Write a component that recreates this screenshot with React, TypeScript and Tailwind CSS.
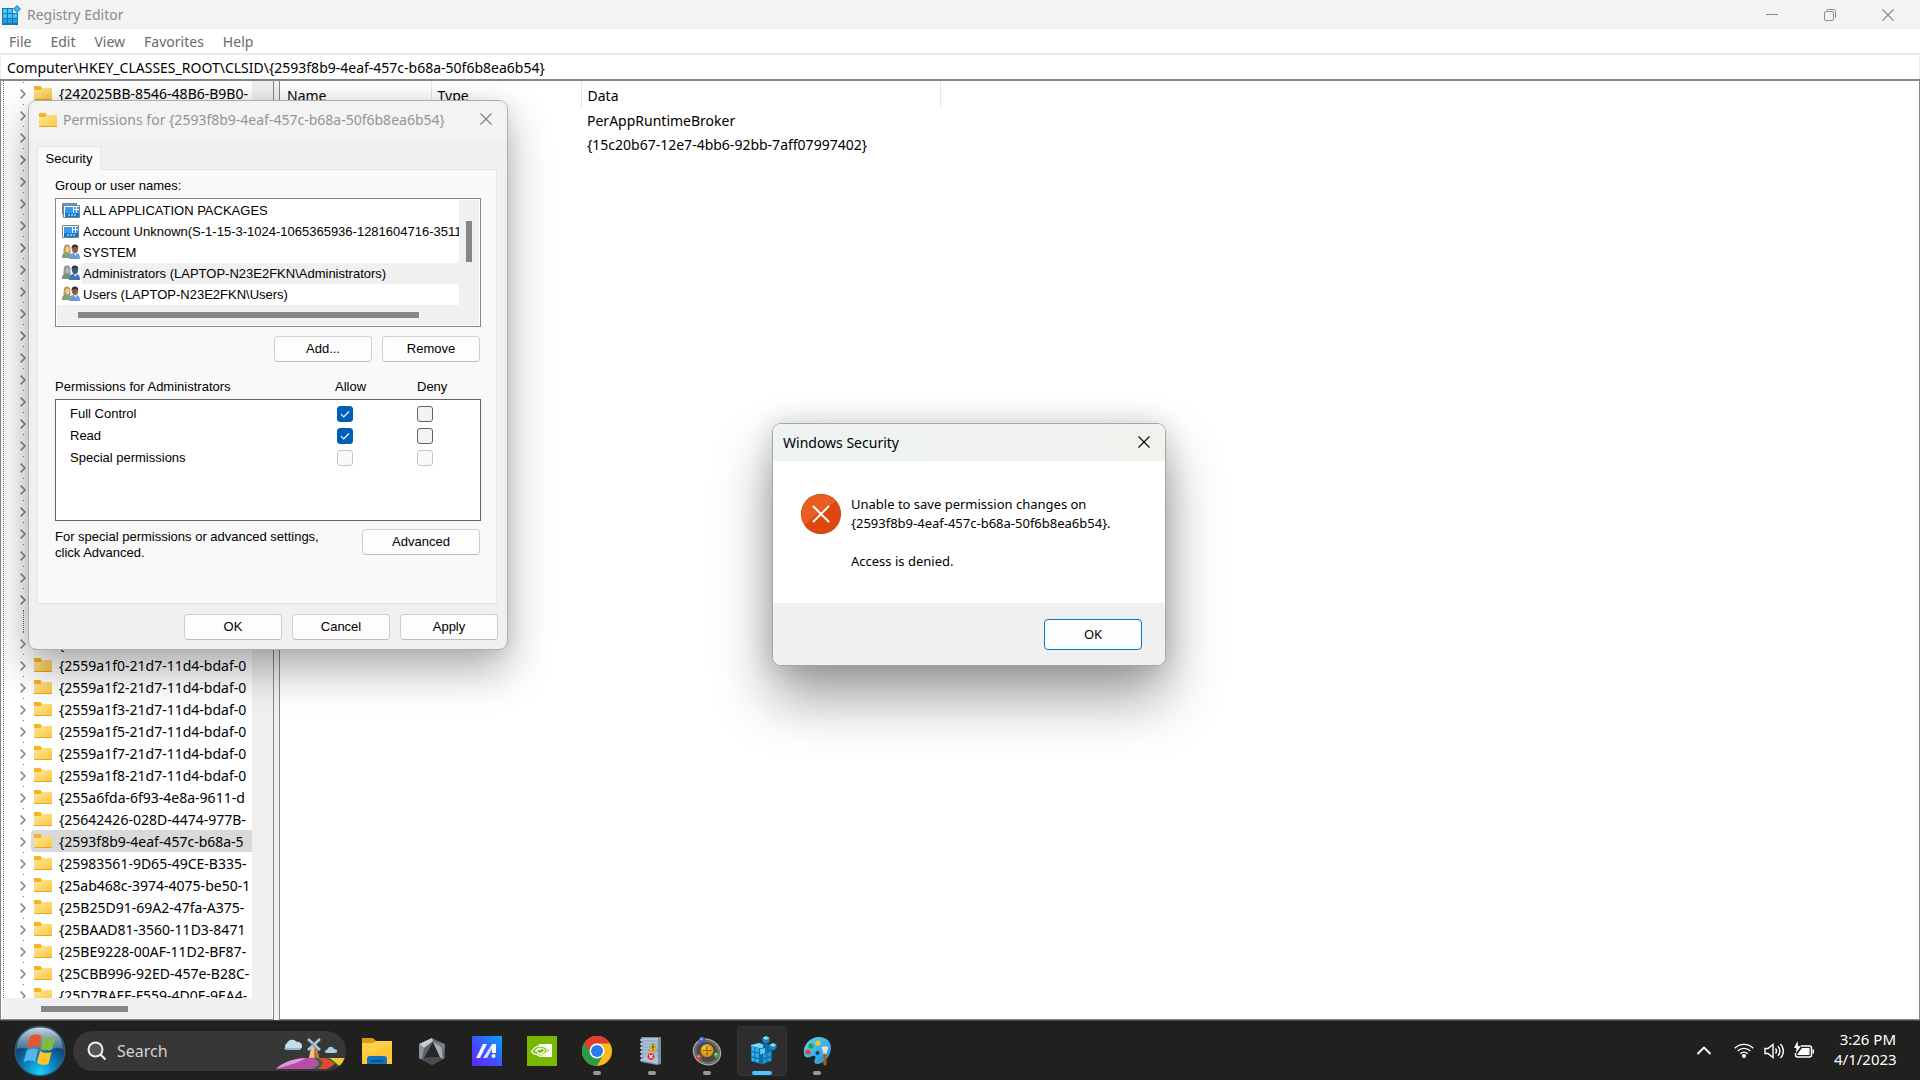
import React, { type ReactNode } from "react";

type UserIcon = "packages" | "package" | "people";

const treeKeys = [
  "{242025BB-8546-48B6-B9B0-",
  ...Array<string>(24).fill(""),
  "{",
  "{2559a1f0-21d7-11d4-bdaf-0",
  "{2559a1f2-21d7-11d4-bdaf-0",
  "{2559a1f3-21d7-11d4-bdaf-0",
  "{2559a1f5-21d7-11d4-bdaf-0",
  "{2559a1f7-21d7-11d4-bdaf-0",
  "{2559a1f8-21d7-11d4-bdaf-0",
  "{255a6fda-6f93-4e8a-9611-d",
  "{25642426-028D-4474-977B-",
  "{2593f8b9-4eaf-457c-b68a-5",
  "{25983561-9D65-49CE-B335-",
  "{25ab468c-3974-4075-be50-1",
  "{25B25D91-69A2-47fa-A375-",
  "{25BAAD81-3560-11D3-8471",
  "{25BE9228-00AF-11D2-BF87-",
  "{25CBB996-92ED-457e-B28C-",
  "{25D7BAFF-F559-4D0E-9EA4-",
];

const selectedKey = 34;
const leafKey = 24;

const users: { name: string; icon: UserIcon; selected?: boolean }[] = [
  { name: "ALL APPLICATION PACKAGES", icon: "packages" },
  {
    name: "Account Unknown(S-1-15-3-1024-1065365936-1281604716-35117",
    icon: "package",
  },
  { name: "SYSTEM", icon: "people" },
  {
    name: "Administrators (LAPTOP-N23E2FKN\\Administrators)",
    icon: "people",
    selected: true,
  },
  { name: "Users (LAPTOP-N23E2FKN\\Users)", icon: "people" },
];

const permissions = [
  { name: "Full Control", allow: true, disabled: false },
  { name: "Read", allow: true, disabled: false },
  { name: "Special permissions", allow: false, disabled: true },
];

const FolderIcon = () => (
  <svg className="h-[18px] w-[18px] shrink-0" viewBox="0 0 18 18">
    <defs>
      <linearGradient id="folder" x1="0" y1="0" x2="1" y2="1">
        <stop offset="0" stopColor="#ffe7a0" />
        <stop offset="1" stopColor="#fbc83c" />
      </linearGradient>
    </defs>
    <path d="M0 2h6.5l1.500 2H18v4H0z" fill="#f7b51c" />
    <path d="M0 6h6.6L8 4h10v11.500H0z" fill="url(#folder)" />
    <path d="M0 15h18v1H0z" fill="#e9a51d" />
  </svg>
);

const RegeditIcon = () => (
  <svg className="h-5 w-5" viewBox="0 0 20 20">
    <path d="M1 3h16v17H1z" fill="#0f79b8" />
    <path
      d="M2 4h4v4H2zM7 4h4v4H7zM2 9h4v4H2zM7 9h4v4H7zM12 9h4v4h-4z"
      fill="#4cc3f4"
    />
    <path d="M2 14h4v4H2zM7 14h4v4H7zM12 14h4v4h-4z" fill="#1fa3e0" />
    <path d="M12 3h5v5h-5z" fill="#f3f3f3" />
    <path d="M16 0l4 4-4 4-4-4z" fill="#1a8fd0" />
    <path d="M16 1.500l2.500 2.500-2.500 2.500-2.500-2.500z" fill="#48b8ec" />
  </svg>
);

const CloseIcon = () => (
  <svg className="h-3 w-3" viewBox="0 0 12 12" stroke="currentColor" fill="none">
    <path d="M.5.5l11 11M11.500.5l-11 11" strokeWidth="1.100" />
  </svg>
);

const PackageIcon = ({ stacked }: { stacked?: boolean }) => (
  <svg className="h-[18px] w-[18px] shrink-0" viewBox="0 0 18 18">
    {stacked && (
      <path d="M.5 12.500V1.500h14v3" fill="#4aa3ea" stroke="#7b8288" />
    )}
    <g transform={stacked ? "translate(1 2)" : "translate(0 1)"}>
      <path d="M.5 1.500h16v12H.5z" fill="#fff" stroke="#7b8288" />
      <path d="M2 3h8v6H2z" fill="#3a9bec" />
      <path d="M11 3h2v2h-2zM14 3h2v2h-2zM11 6h2v3h-2zM14 6h2v3h-2z" fill="#3a9bec" />
      <path d="M2 9h14v4H2z" fill="#0f78d4" />
      <path d="M5 10.500h2v1H5zM8 10.500h2v1H8zM11 10.500h2v1h-2z" fill="#fff" />
    </g>
  </svg>
);

const PeopleIcon = ({ selected }: { selected?: boolean }) => (
  <svg className="h-[18px] w-[18px] shrink-0" viewBox="0 0 18 18">
    <path d="M0 14c0-4 1-5 4-5.500L8 9l1 5z" fill={selected ? "#74956a" : "#86a06a"} />
    <path d="M1.500 9C1.500 3 2 .5 5 .5S8.800 3 8.500 9z" fill={selected ? "#8b9798" : "#b79a62"} />
    <ellipse cx="5.500" cy="5.500" rx="2" ry="3" fill={selected ? "#b5b9b8" : "#eccba4"} />
    <path d="M7 15c0-4 1-5.500 4-6h4c2 .5 3 3 3 6z" fill={selected ? "#3f78b8" : "#6b9bd8"} />
    <path d="M12 9l1.500 3L15 9z" fill="#dce8f4" />
    <ellipse cx="13" cy="5" rx="3" ry="4" fill={selected ? "#3b5975" : "#8c5c3c"} />
    <path d="M9.500 5C9.500 1.500 11 .5 13 .5s3.500 1 3.300 4C15 2.500 11 2.500 9.500 5z" fill={selected ? "#1f3448" : "#3d2d25"} />
  </svg>
);

const TreeRow = ({ name, index }: { name: string; index: number }) => {
  const leaf = index === leafKey;
  return (
    <li className="flex h-[22px] shrink-0 items-center">
      <div className="ml-[13px] flex h-full w-3 shrink-0 flex-col items-center">
        {leaf ? (
          <div className="ml-px h-full w-px border-l border-dotted border-[#6d6d6d]" />
        ) : (
          <>
            <div className="h-px w-px bg-[#6d6d6d]" />
            <svg className="mt-[6px] h-[10px] w-[6px]" viewBox="0 0 6 10" fill="none">
              <path d="M.6.6L5 5 .6 9.400" stroke="#858585" strokeWidth="1.500" />
            </svg>
          </>
        )}
      </div>
      <div
        className={
          index === selectedKey
            ? "ml-[2px] flex h-full grow items-center gap-[7px] rounded-l-sm bg-[#d9d9d9] pl-[3px]"
            : "ml-[2px] flex h-full grow items-center gap-[7px] pl-[3px]"
        }
      >
        <FolderIcon />
        <span className="whitespace-nowrap pt-px leading-5">{name}</span>
      </div>
    </li>
  );
};

const KeyTree = () => (
  <nav
    aria-label="Registry keys"
    className="flex w-[274px] shrink-0 flex-col border border-t-0 border-[#828790] bg-white"
  >
    <div className="flex min-h-0 grow">
      <div className="ml-[2px] min-w-0 grow overflow-hidden border-l border-dotted border-[#6d6d6d] pt-px">
        <ul>
          {treeKeys.map((name, idx) => (
            <TreeRow name={name} index={idx} key={idx} />
          ))}
        </ul>
      </div>
      <div className="w-[21px] shrink-0 bg-[#f0f0f0]" />
    </div>
    <div className="mx-px h-[21px] shrink-0 bg-[#f0f0f0] pt-2 pl-[39px]">
      <div className="h-[6px] w-[87px] bg-[#858688]" />
    </div>
  </nav>
);

const ValueList = () => (
  <div className="min-w-0 grow border border-t-0 border-[#828790] bg-white">
    <table className="w-[661px] table-fixed border-collapse text-left">
      <thead>
        <tr className="h-[27px]">
          <th className="w-[151px] border-r border-[#e5e5e5] pt-[3px] pl-[7px] font-normal">Name</th>
          <th className="w-[150px] border-r border-[#e5e5e5] pt-[3px] pl-[6px] font-normal">Type</th>
          <th className="border-r border-[#e5e5e5] pt-[3px] pl-[6px] font-normal">Data</th>
        </tr>
      </thead>
      <tbody>
        <tr className="h-6">
          <td />
          <td />
          <td className="pt-[2px] pl-[6px]">PerAppRuntimeBroker</td>
        </tr>
        <tr className="h-6">
          <td />
          <td />
          <td className="pt-[2px] pl-[6px]">{"{15c20b67-12e7-4bb6-92bb-7aff07997402}"}</td>
        </tr>
      </tbody>
    </table>
  </div>
);

const DialogButton = ({ children, wide }: { children: ReactNode; wide?: boolean }) => (
  <button
    type="button"
    className={`${wide ? "w-[118px]" : "w-[98px]"} h-[26px] rounded border border-[#d0d0d0] border-b-[#bdbdbd] bg-[#fdfdfd] leading-4`}
  >
    {children}
  </button>
);

const PermissionBox = ({
  label,
  checked,
  disabled,
}: {
  label: string;
  checked: boolean;
  disabled: boolean;
}) => (
  <span className="grid h-4 w-4">
    <input
      type="checkbox"
      aria-label={label}
      defaultChecked={checked}
      disabled={disabled}
      className="col-start-1 row-start-1 h-4 w-4 appearance-none rounded-[3px] border border-[#626262] bg-[#f3f3f3] checked:border-[#005fb8] checked:bg-[#005fb8] disabled:border-[#c5c5c5] disabled:bg-[#fafafa]"
    />
    {checked && (
      <svg className="pointer-events-none col-start-1 row-start-1 h-4 w-4" viewBox="0 0 16 16" fill="none">
        <path d="M4 8.200l2.700 2.700L12 5.500" stroke="#fff" strokeWidth="1.100" />
      </svg>
    )}
  </span>
);

const PermissionsDialog = () => (
  <section
    role="dialog"
    aria-label="Permissions"
    className="absolute top-[100px] left-[28px] w-[480px] rounded-[9px] border border-[#adadad] bg-[#f0f0f0] font-['Liberation_Sans',Arial,sans-serif] text-[13px] shadow-[0_20px_44px_rgba(0,0,0,0.32),0_0_16px_rgba(0,0,0,0.08)]"
  >
    <header className="flex h-[37px] items-center rounded-t-lg bg-[#f3f3f3] pl-[10px] font-['Noto_Sans','Open_Sans',sans-serif] text-sm text-[#939393]">
      <FolderIcon />
      <h2 className="ml-[6px] grow whitespace-nowrap">
        {"Permissions for {2593f8b9-4eaf-457c-b68a-50f6b8ea6b54}"}
      </h2>
      <button type="button" aria-label="Close" className="mr-[3px] grid h-8 w-9 place-items-center pb-[2px] text-[#7c7c7c]">
        <CloseIcon />
      </button>
    </header>

    <div className="px-2 pt-2">
      <div role="tablist" className="flex h-[23px]">
        <button
          type="button"
          role="tab"
          aria-selected="true"
          className="-mb-px w-[64px] border border-b-0 border-[#e5e5e5] bg-[#f9f9f9] leading-5"
        >
          Security
        </button>
      </div>
      <div className="mr-[2px] border border-[#e5e5e5] bg-[#f9f9f9] px-[17px] pt-2 pb-[42px]">
        <p id="groups" className="leading-4">Group or user names:</p>
        <div className="mt-1 flex h-[129px] w-[426px] flex-col border border-[#828790] bg-white p-px">
          <div className="flex">
            <ul role="listbox" aria-labelledby="groups" className="min-w-0 grow overflow-hidden pl-[5px]">
              {users.map((user) => (
                <li
                  role="option"
                  aria-selected={!!user.selected}
                  className="flex h-[21px] items-center"
                  key={user.name}
                >
                  {user.icon === "people" ? (
                    <PeopleIcon selected={user.selected} />
                  ) : (
                    <PackageIcon stacked={user.icon === "packages"} />
                  )}
                  <span
                    className={
                      user.selected
                        ? "ml-px grow bg-[#f0f0f0] pl-[2px] leading-[21px] whitespace-nowrap"
                        : "ml-px grow pl-[2px] leading-[21px] whitespace-nowrap"
                    }
                  >
                    {user.name}
                  </span>
                </li>
              ))}
            </ul>
            <div className="w-5 shrink-0 bg-[#f0f0f0] pt-[21px] pl-[7px]">
              <div className="h-[41px] w-[6px] bg-[#858688]" />
            </div>
          </div>
          <div className="grow bg-[#f0f0f0] pt-[7px] pl-[21px]">
            <div className="h-[6px] w-[341px] bg-[#858688]" />
          </div>
        </div>

        <div className="mt-[9px] flex w-[425px] justify-end gap-[10px]">
          <DialogButton>Add...</DialogButton>
          <DialogButton>Remove</DialogButton>
        </div>

        <div className="mt-[17px] flex leading-4">
          <p id="permissions" className="w-[280px]">Permissions for Administrators</p>
          <p className="w-[82px]">Allow</p>
          <p>Deny</p>
        </div>
        <div className="mt-1 h-[122px] w-[426px] border border-[#646464] bg-white pt-[3px]">
          <table aria-labelledby="permissions" className="w-full table-fixed text-left">
            <tbody>
              {permissions.map(({ name, allow, disabled }) => (
                <tr className="h-[22px]" key={name}>
                  <th className="w-[281px] pl-[14px] leading-4 font-normal">{name}</th>
                  <td className="w-[80px]">
                    <PermissionBox label={`${name} allow`} checked={allow} disabled={disabled} />
                  </td>
                  <td>
                    <PermissionBox label={`${name} deny`} checked={false} disabled={disabled} />
                  </td>
                </tr>
              ))}
            </tbody>
          </table>
        </div>

        <div className="mt-2 flex w-[425px] justify-between">
          <p className="leading-4">
            For special permissions or advanced settings,
            <br />
            click Advanced.
          </p>
          <DialogButton wide>Advanced</DialogButton>
        </div>
      </div>
    </div>

    <footer className="flex justify-end gap-[10px] px-[9px] pt-[10px] pb-[9px]">
      <DialogButton>OK</DialogButton>
      <DialogButton>Cancel</DialogButton>
      <DialogButton>Apply</DialogButton>
    </footer>
  </section>
);

const ErrorDialog = () => (
  <section
    role="alertdialog"
    aria-label="Windows Security"
    className="absolute top-[423px] left-[772px] w-[394px] rounded-[9px] border border-[#a6a6a6] bg-white text-[13px] shadow-[0_32px_56px_rgba(0,0,0,0.38),0_0_28px_rgba(0,0,0,0.16)]"
  >
    <header className="flex h-[37px] items-center rounded-t-lg bg-linear-to-r from-[#eef3f3] to-[#f2f3ef] pl-[10px] text-sm">
      <h2 className="grow">Windows Security</h2>
      <button type="button" aria-label="Close" className="mr-[3px] grid h-8 w-9 place-items-center pb-[2px]">
        <CloseIcon />
      </button>
    </header>
    <div className="flex h-[142px] gap-[10px] pt-[33px] pl-7">
      <svg className="h-10 w-10 shrink-0" viewBox="0 0 40 40">
        <circle cx="20" cy="20" r="20" fill="#cf3f0b" />
        <circle cx="20" cy="19.500" r="19.500" fill="#dc480f" />
        <path d="M.5 20A19.500 19.500 0 0 1 35 7.500C26 14 13 20 4 31A19 19 0 0 1 .5 20z" fill="#e85d20" />
        <path d="M12.500 12.500l15 15M27.500 12.500l-15 15" stroke="#fff" strokeWidth="2" strokeLinecap="round" />
      </svg>
      <p className="pt-px leading-[19px]">
        Unable to save permission changes on
        <br />
        {"{2593f8b9-4eaf-457c-b68a-50f6b8ea6b54}."}
        <br />
        <br />
        Access is denied.
      </p>
    </div>
    <footer className="flex h-[62px] justify-end rounded-b-lg bg-[#f0f0f0] pt-4 pr-[23px]">
      <button type="button" className="h-[31px] w-[98px] rounded border border-[#0078d4] bg-[#fdfdfd]">
        OK
      </button>
    </footer>
  </section>
);

const StartOrb = () => (
  <svg className="h-[52px] w-[52px]" viewBox="0 0 52 52">
    <defs>
      <radialGradient id="orb" cx=".5" cy=".95" r=".8">
        <stop offset="0" stopColor="#19d3fb" />
        <stop offset=".35" stopColor="#0a8fcb" />
        <stop offset=".75" stopColor="#0b4f86" />
        <stop offset="1" stopColor="#1c4468" />
      </radialGradient>
      <linearGradient id="shine" x1="0" y1="0" x2="0" y2="1">
        <stop offset="0" stopColor="#d5e2ec" stopOpacity=".95" />
        <stop offset="1" stopColor="#7496b4" stopOpacity=".45" />
      </linearGradient>
    </defs>
    <circle cx="26" cy="26" r="25.500" fill="#31566e" />
    <circle cx="26" cy="26" r="24" fill="url(#orb)" />
    <path d="M3 24C3 11 13 2.500 26 2.500S49 11 49 24c-8-3-15 2-23 2S10 21 3 24z" fill="url(#shine)" />
    <path d="M16 11.500c4-2.500 8-2.500 11.500-.5l-3 12c-3-2-7.500-2-11.500.5z" fill="#e5562a" />
    <path d="M29.500 12c4 2 8 2 12 .5l-3.500 12c-4 1.500-8 1-11.500-1z" fill="#82bc3f" />
    <path d="M12.500 25.500c4-2.500 8-2.500 11.500-.5l-3 12c-3.500-2-7.500-2-11.500.5z" fill="#59b4ec" />
    <path d="M26 26c3.500 2 7.500 2.500 11.500 1l-3 12c-4 1.500-8 1-11.500-1z" fill="#fbc42c" />
  </svg>
);

const SearchArt = () => (
  <svg className="h-10 w-[70px] shrink-0" viewBox="0 0 70 40">
    <path d="M11 19a4 4 0 0 1 0-7 6 6 0 0 1 10-1 4 4 0 0 1 2 8z" fill="#c2dcea" />
    <path d="M8 17h17c-1 2-2 2-4 2H12c-2 0-3 0-4-2z" fill="#8fb9d0" />
    <path d="M51 22c-3 0-3-3 0-3 1-4 6-4 7-1 4 0 4 4 1 4z" fill="#a9cde2" />
    <path d="M35.500 14h5l2.500 13H33z" fill="#efc28a" />
    <path d="M38.500 14h2l2.500 13h-5z" fill="#b37840" />
    <path d="M34.500 14l3-4 3.500 4v2h-6.500z" fill="#8b4d2d" />
    <path d="M32 8l12 11M44 8L32 19" stroke="#a9cbdc" strokeWidth="2.500" />
    <path d="M31 9l12 11M43 7L31 18" stroke="#4f7588" strokeWidth=".7" />
    <path d="M0 38c8-8 23-12 38-11 9 0 14 3 8 11z" fill="#b94ca5" />
    <path d="M0 38c6-6 17-11 30-11-4 3-13 6-20 8z" fill="#d79bd7" />
    <path d="M37 27h17c3 4-2 8-10 11h-8c8-3 10-7 1-11z" fill="#2e6a3c" />
    <path d="M41 27h18c3 4-2 8-8 11h-9c5-4 7-8-1-11z" fill="#dd4931" />
    <path d="M51 27h18c-1 3-2 6-4 8-5 0-6-5-14-8z" fill="#f2c532" />
    <path d="M51 27c7 2 9 7 13 9" stroke="#2e6a3c" strokeWidth="1.500" fill="none" />
  </svg>
);

const ExplorerIcon = () => (
  <svg className="h-[30px] w-[30px]" viewBox="0 0 30 30">
    <path d="M0 2h11l3 3h12v6H0z" fill="#dc9c0c" />
    <path d="M0 7h11l3-2h16v23H0z" fill="#ffcf48" />
    <path d="M0 20L30 9v19H0z" fill="#fcc12e" opacity=".6" />
    <path d="M5 28v-5a3 3 0 0 1 3-3h14a3 3 0 0 1 3 3v5z" fill="#0f73c0" />
    <path d="M9 24h12v2H9z" fill="#0a4f90" />
  </svg>
);

const ArmouryIcon = () => (
  <svg className="h-[30px] w-[30px]" viewBox="0 0 30 30">
    <path d="M15 2l13 6v14l-13 7-13-7V8z" fill="#5c6268" />
    <path d="M15 2L2 8l5 4 9-7z" fill="#c7ccd1" />
    <path d="M2 8l5 4-2 12-3-2z" fill="#8d949b" />
    <path d="M16 5l12 3-3 15z" fill="#777e85" />
    <path d="M16 6L7 22l16-1z" fill="#24282c" />
    <path d="M7 22l16-1 3 2-11 6-12-6z" fill="#484d52" />
    <path d="M16 6l7 15 3 2-2-12z" fill="#aab0b6" />
  </svg>
);

const MyAsusIcon = () => (
  <svg className="h-[30px] w-[30px]" viewBox="0 0 30 30">
    <defs>
      <linearGradient id="asus" x1="0" y1="1" x2="1" y2="0">
        <stop offset="0" stopColor="#6522ff" />
        <stop offset=".5" stopColor="#3b56fb" />
        <stop offset="1" stopColor="#05a5f5" />
      </linearGradient>
    </defs>
    <path d="M0 0h30v30H0z" fill="url(#asus)" />
    <path d="M4 22L11 8h4L8 22z" fill="#f1f3ff" />
    <path d="M11 22L20 8h3l-8 14z" fill="#d5dcff" />
    <path d="M20 8h4v9h-4z" fill="#f1f3ff" />
    <circle cx="21.500" cy="20" r="2" fill="#fff" />
  </svg>
);

const NvidiaIcon = () => (
  <svg className="h-[30px] w-[30px]" viewBox="0 0 30 30">
    <path d="M0 0h30v30H0z" fill="#76b900" />
    <path d="M12 8h13v13H12z" fill="#fff" />
    <path d="M12 9.500c5 0 8 2.500 10 5-3 3.500-6 5.500-10 5.500z" fill="#76b900" />
    <path
      d="M4.500 15.500C7 11 12 9 16 10.500c2.500 1 4 2.500 4.500 4-2 3-6 5-9.500 4.500S5.500 17 4.500 15.500zM8 15.500c1.500-3 5-4 7.500-3 1.500.5 2 1.500 2 2.200-1 1.800-3 2.800-5 2.600s-3-1.500-2.500-2.800 2.500-1.800 4-.8"
      fill="none"
      stroke="#fff"
      strokeWidth="1.300"
    />
  </svg>
);

const ChromeIcon = () => (
  <svg className="h-[30px] w-[30px]" viewBox="0 0 30 30">
    <circle cx="15" cy="15" r="15" fill="#fbbc16" />
    <path d="M2 7.500A15 15 0 0 0 15 30l6.500-11.200L15 15z" fill="#2a9d49" />
    <path d="M2 7.500A15 15 0 0 1 28 7.500H15a7.500 7.500 0 0 0-6.500 4L8 15z" fill="#e33b2e" />
    <circle cx="15" cy="15" r="7.500" fill="#fff" />
    <circle cx="15" cy="15" r="6" fill="#2c7be9" />
  </svg>
);

const EventLogIcon = () => (
  <svg className="h-[30px] w-[30px]" viewBox="0 0 30 30">
    <path d="M4 1h20v27l-4 1L4 26z" fill="#7590a6" />
    <path d="M6 2h15v26L6 25z" fill="#a9c3da" />
    <path d="M6 5h15M6 8h15M6 11h15M6 14h15M6 17h15M6 20h15" stroke="#7f9db8" strokeWidth=".8" />
    <path d="M3 4h3M3 8h3M3 12h3M3 16h3M3 20h3M3 24h3" stroke="#c3ccd3" strokeWidth="1.500" />
    <path d="M16 7l4.500 8h-9z" fill="#f5c21b" stroke="#a8780b" strokeWidth=".6" />
    <path d="M16 9.500v3M16 13.300v1" stroke="#222" strokeWidth="1.200" />
    <circle cx="14" cy="20.500" r="4" fill="#cf3030" stroke="#f3dada" strokeWidth=".7" />
    <path d="M12.300 18.800l3.400 3.400M15.700 18.800l-3.400 3.400" stroke="#fff" strokeWidth="1.200" />
  </svg>
);

const OrbitIcon = () => (
  <svg className="h-[30px] w-[30px]" viewBox="0 0 30 30">
    <ellipse cx="15" cy="16" rx="14" ry="12.500" transform="rotate(30 15 16)" fill="#6a6b69" stroke="#a9aba9" strokeWidth="1.200" />
    <ellipse cx="15" cy="16" rx="11" ry="9.500" transform="rotate(30 15 16)" fill="#484847" />
    <circle cx="15" cy="14.500" r="6.500" fill="#d69b12" />
    <circle cx="14" cy="13" r="4" fill="#f5cb4b" opacity=".7" />
    <path d="M15 10v9M10.500 14.500h9" stroke="#8a5d0c" strokeWidth="1.200" />
    <circle cx="10" cy="4" r="3.200" fill="#3b5bc4" />
    <circle cx="7" cy="21" r="2.800" fill="#c9483c" />
    <circle cx="24.500" cy="19" r="2.800" fill="#45a13b" />
    <circle cx="9.500" cy="3.200" r="1.200" fill="#a9b8ee" />
    <circle cx="6.500" cy="20.300" r="1" fill="#f0b3ab" />
    <circle cx="24" cy="18.300" r="1" fill="#b8e2b0" />
  </svg>
);

const RegeditTaskIcon = () => (
  <svg className="h-[30px] w-[30px]" viewBox="0 0 30 30">
    <path d="M4 9l8-2 13 2v16l-10 3.500L4 25z" fill="#0f6ca6" />
    <path d="M4 9l8-2 4 1.500v3l-1 1L4 10z" fill="#79d6fa" />
    <path
      d="M4.500 10.500l3 .7v4.300l-3-.6zM8.500 11.400l3.300.7v4.300l-3.300-.7zM4.500 16l3 .6V21l-3-.7zM8.500 16.900l3.300.7V22l-3.300-.8zM4.500 21.500l3 .7v3.500l-3-1zM8.500 22.400l3.300.8v3.600l-3.300-1z"
      fill="#2fb0ec"
    />
    <path d="M13 13.500l5-1.500v5l-5 1.500z" fill="#5bc9f7" />
    <path d="M16 18l3.500-1v4.500L16 22.500zM20.500 16.800l3.500-1V20l-3.500 1zM16 23.500l3.500-1v4L16 27.500zM20.500 22.200l3.500-1v3.600l-3.500 1z" fill="#2795d0" />
    <path d="M19 0l3.500 2v4L19 8l-3.500-2V2zM26 7l3.500 2v3.500L26 14.500l-3.500-2V9z" fill="#1684c2" />
    <path d="M19 0l3.500 2L19 4l-3.500-2zM26 7l3.500 2L26 11l-3.500-2z" fill="#7fdcfc" />
  </svg>
);

const PaintIcon = () => (
  <svg className="h-[30px] w-[30px]" viewBox="0 0 30 30">
    <defs>
      <linearGradient id="paint" x1="0" y1="0" x2="1" y2="1">
        <stop offset="0" stopColor="#62d4f8" />
        <stop offset="1" stopColor="#1d8fd8" />
      </linearGradient>
    </defs>
    <path d="M17 1c8 0 12 5 12 11s-5 15-13 16c-4 .5-4-3-3-5 1.500-3-1-4-3-3-2 1.500-7 3-8-2C.500 9 8 1 17 1z" fill="url(#paint)" />
    <circle cx="16" cy="7" r="2.600" fill="#f8c520" />
    <circle cx="9" cy="10" r="2.600" fill="#2f9d3c" />
    <circle cx="6" cy="16" r="2.600" fill="#dc4a2b" />
    <circle cx="15.500" cy="17" r="2" fill="#17405e" />
    <path d="M19.500 11c2-1 5-1 7 0l-1.500 5h-4z" fill="#f3dfc9" />
    <path d="M21 16h4v2h-4z" fill="#c9ced2" />
    <path d="M21.500 18h3v10a1.500 1.500 0 0 1-3 0z" fill="#a85c1c" />
  </svg>
);

const tasks: { name: string; icon: ReactNode; state: "idle" | "open" | "active" }[] = [
  { name: "File Explorer", icon: <ExplorerIcon />, state: "idle" },
  { name: "Armoury Crate", icon: <ArmouryIcon />, state: "idle" },
  { name: "MyASUS", icon: <MyAsusIcon />, state: "idle" },
  { name: "NVIDIA", icon: <NvidiaIcon />, state: "idle" },
  { name: "Google Chrome", icon: <ChromeIcon />, state: "open" },
  { name: "Event Viewer", icon: <EventLogIcon />, state: "open" },
  { name: "Component Services", icon: <OrbitIcon />, state: "open" },
  { name: "Registry Editor", icon: <RegeditTaskIcon />, state: "active" },
  { name: "Paint", icon: <PaintIcon />, state: "open" },
];

const taskStyles = {
  idle: "border-transparent",
  open: "border-transparent",
  active: "border-[#353535] bg-[#2d2d2d]",
};

const markStyles = {
  idle: "w-2",
  open: "w-2 bg-[#9a9a9a]",
  active: "w-5 bg-[#4cc2ff]",
};

const Taskbar = () => (
  <footer className="flex h-[60px] shrink-0 items-center border-t border-[#454646] bg-[#20201f] pl-[14px] text-white">
    <button type="button" aria-label="Start">
      <StartOrb />
    </button>
    <label className="ml-[7px] flex h-10 w-[273px] items-center overflow-hidden rounded-full bg-[#373737] pl-[14px]">
      <svg className="h-5 w-5 shrink-0" viewBox="0 0 20 20" fill="none">
        <circle cx="8.500" cy="8.500" r="7" fill="#555" stroke="#ededed" strokeWidth="2" />
        <path d="M13.500 13.500l5 5" stroke="#ededed" strokeWidth="2.200" />
      </svg>
      <input
        type="text"
        aria-label="Search"
        placeholder="Search"
        className="ml-[10px] w-0 min-w-0 grow bg-transparent text-base outline-none placeholder:text-[#d2d2d2]"
      />
      <SearchArt />
    </label>
    <div className="ml-[6px] flex grow gap-[5px]">
      {tasks.map(({ name, icon, state }) => (
        <button
          type="button"
          aria-label={name}
          className={`${taskStyles[state]} flex h-[50px] w-[50px] flex-col items-center rounded border pt-[9px]`}
          key={name}
        >
          {icon}
          <span className={`${markStyles[state]} mt-[5px] h-1 rounded-full`} />
        </button>
      ))}
    </div>
    <button type="button" aria-label="Show hidden icons" className="mr-[22px]">
      <svg className="h-4 w-4" viewBox="0 0 16 16" fill="none">
        <path d="M1.500 11L8 4.500l6.500 6.500" stroke="#fff" strokeWidth="1.800" />
      </svg>
    </button>
    <div className="mr-[20px] flex items-center gap-[10px]">
      <svg className="h-5 w-5" viewBox="0 0 20 20" fill="none" stroke="#fff" strokeWidth="1.400">
        <path d="M.8 7.200a13 13 0 0 1 18.400 0M3.600 10a9 9 0 0 1 12.800 0M6.400 12.700a5.200 5.200 0 0 1 7.200 0" />
        <circle cx="10" cy="15" r="1.400" fill="#fff" />
      </svg>
      <svg className="h-5 w-5" viewBox="0 0 20 20" fill="none" stroke="#fff" strokeWidth="1.400">
        <path d="M1 7.500h3L9 3.500v13L4 12.500H1z" />
        <path d="M11.500 7.500a4 4 0 0 1 0 5M14 5.200a7 7 0 0 1 0 9.600M16.500 3a10 10 0 0 1 0 14" />
      </svg>
      <svg className="h-5 w-5" viewBox="0 0 20 20" fill="none">
        <path d="M7 5h8.500A2 2 0 0 1 17.500 7v7a2 2 0 0 1-2 2H3.500a2 2 0 0 1-2-2v-2" stroke="#fff" strokeWidth="1.500" />
        <path d="M8 7h7.500v7H3.500v-1z" fill="#fff" />
        <path d="M18.500 8.500h1.500v4h-1.500z" fill="#fff" />
        <path d="M3.500 0L0 7h2.500L2 12l5-7H4z" fill="#fff" />
      </svg>
    </div>
    <p className="w-[62px] pb-1 text-right text-[15px] leading-5 whitespace-nowrap">
      3:26 PM
      <br />
      4/1/2023
    </p>
    <div className="w-6 shrink-0" />
  </footer>
);

const TitleBar = () => (
  <header className="flex h-[29px] shrink-0 items-center bg-[#f3f3f3] pl-px text-[#8b8b8b]">
    <RegeditIcon />
    <h1 className="ml-[6px] grow">Registry Editor</h1>
    <button type="button" aria-label="Minimize" className="grid h-full w-[58px] place-items-center">
      <span className="h-px w-3 bg-[#8b8b8b]" />
    </button>
    <button type="button" aria-label="Restore" className="grid h-full w-[58px] place-items-center">
      <svg className="h-3 w-3" viewBox="0 0 12 12" fill="none" stroke="currentColor">
        <rect x=".5" y="2.500" width="9" height="9" rx="1.500" />
        <path d="M2.500.5H9.500a2 2 0 0 1 2 2V9" />
      </svg>
    </button>
    <button type="button" aria-label="Close" className="mr-[3px] grid h-full w-[58px] place-items-center">
      <CloseIcon />
    </button>
  </header>
);

const App = () => {
  return (
    <main className="relative flex h-screen flex-col overflow-hidden bg-[#f0f0f0] font-['Noto_Sans','Open_Sans',sans-serif] text-sm text-black">
      <TitleBar />
      <nav aria-label="Menu" className="flex h-6 shrink-0 items-center gap-px bg-white pt-px text-[#6b6b6b]">
        {["File", "Edit", "View", "Favorites", "Help"].map((item) => (
          <button type="button" className="px-[9px]" key={item}>
            {item}
          </button>
        ))}
      </nav>
      <input
        type="text"
        aria-label="Address"
        defaultValue={"Computer\\HKEY_CLASSES_ROOT\\CLSID\\{2593f8b9-4eaf-457c-b68a-50f6b8ea6b54}"}
        className="h-[26px] w-full shrink-0 border-x border-t-2 border-[#ebebeb] bg-white px-[6px] outline-none"
      />
      <div className="flex min-h-0 grow gap-[5px] border-t-2 border-[#828790]">
        <KeyTree />
        <ValueList />
      </div>
      <Taskbar />
      <PermissionsDialog />
      <ErrorDialog />
    </main>
  );
};

export default App;
